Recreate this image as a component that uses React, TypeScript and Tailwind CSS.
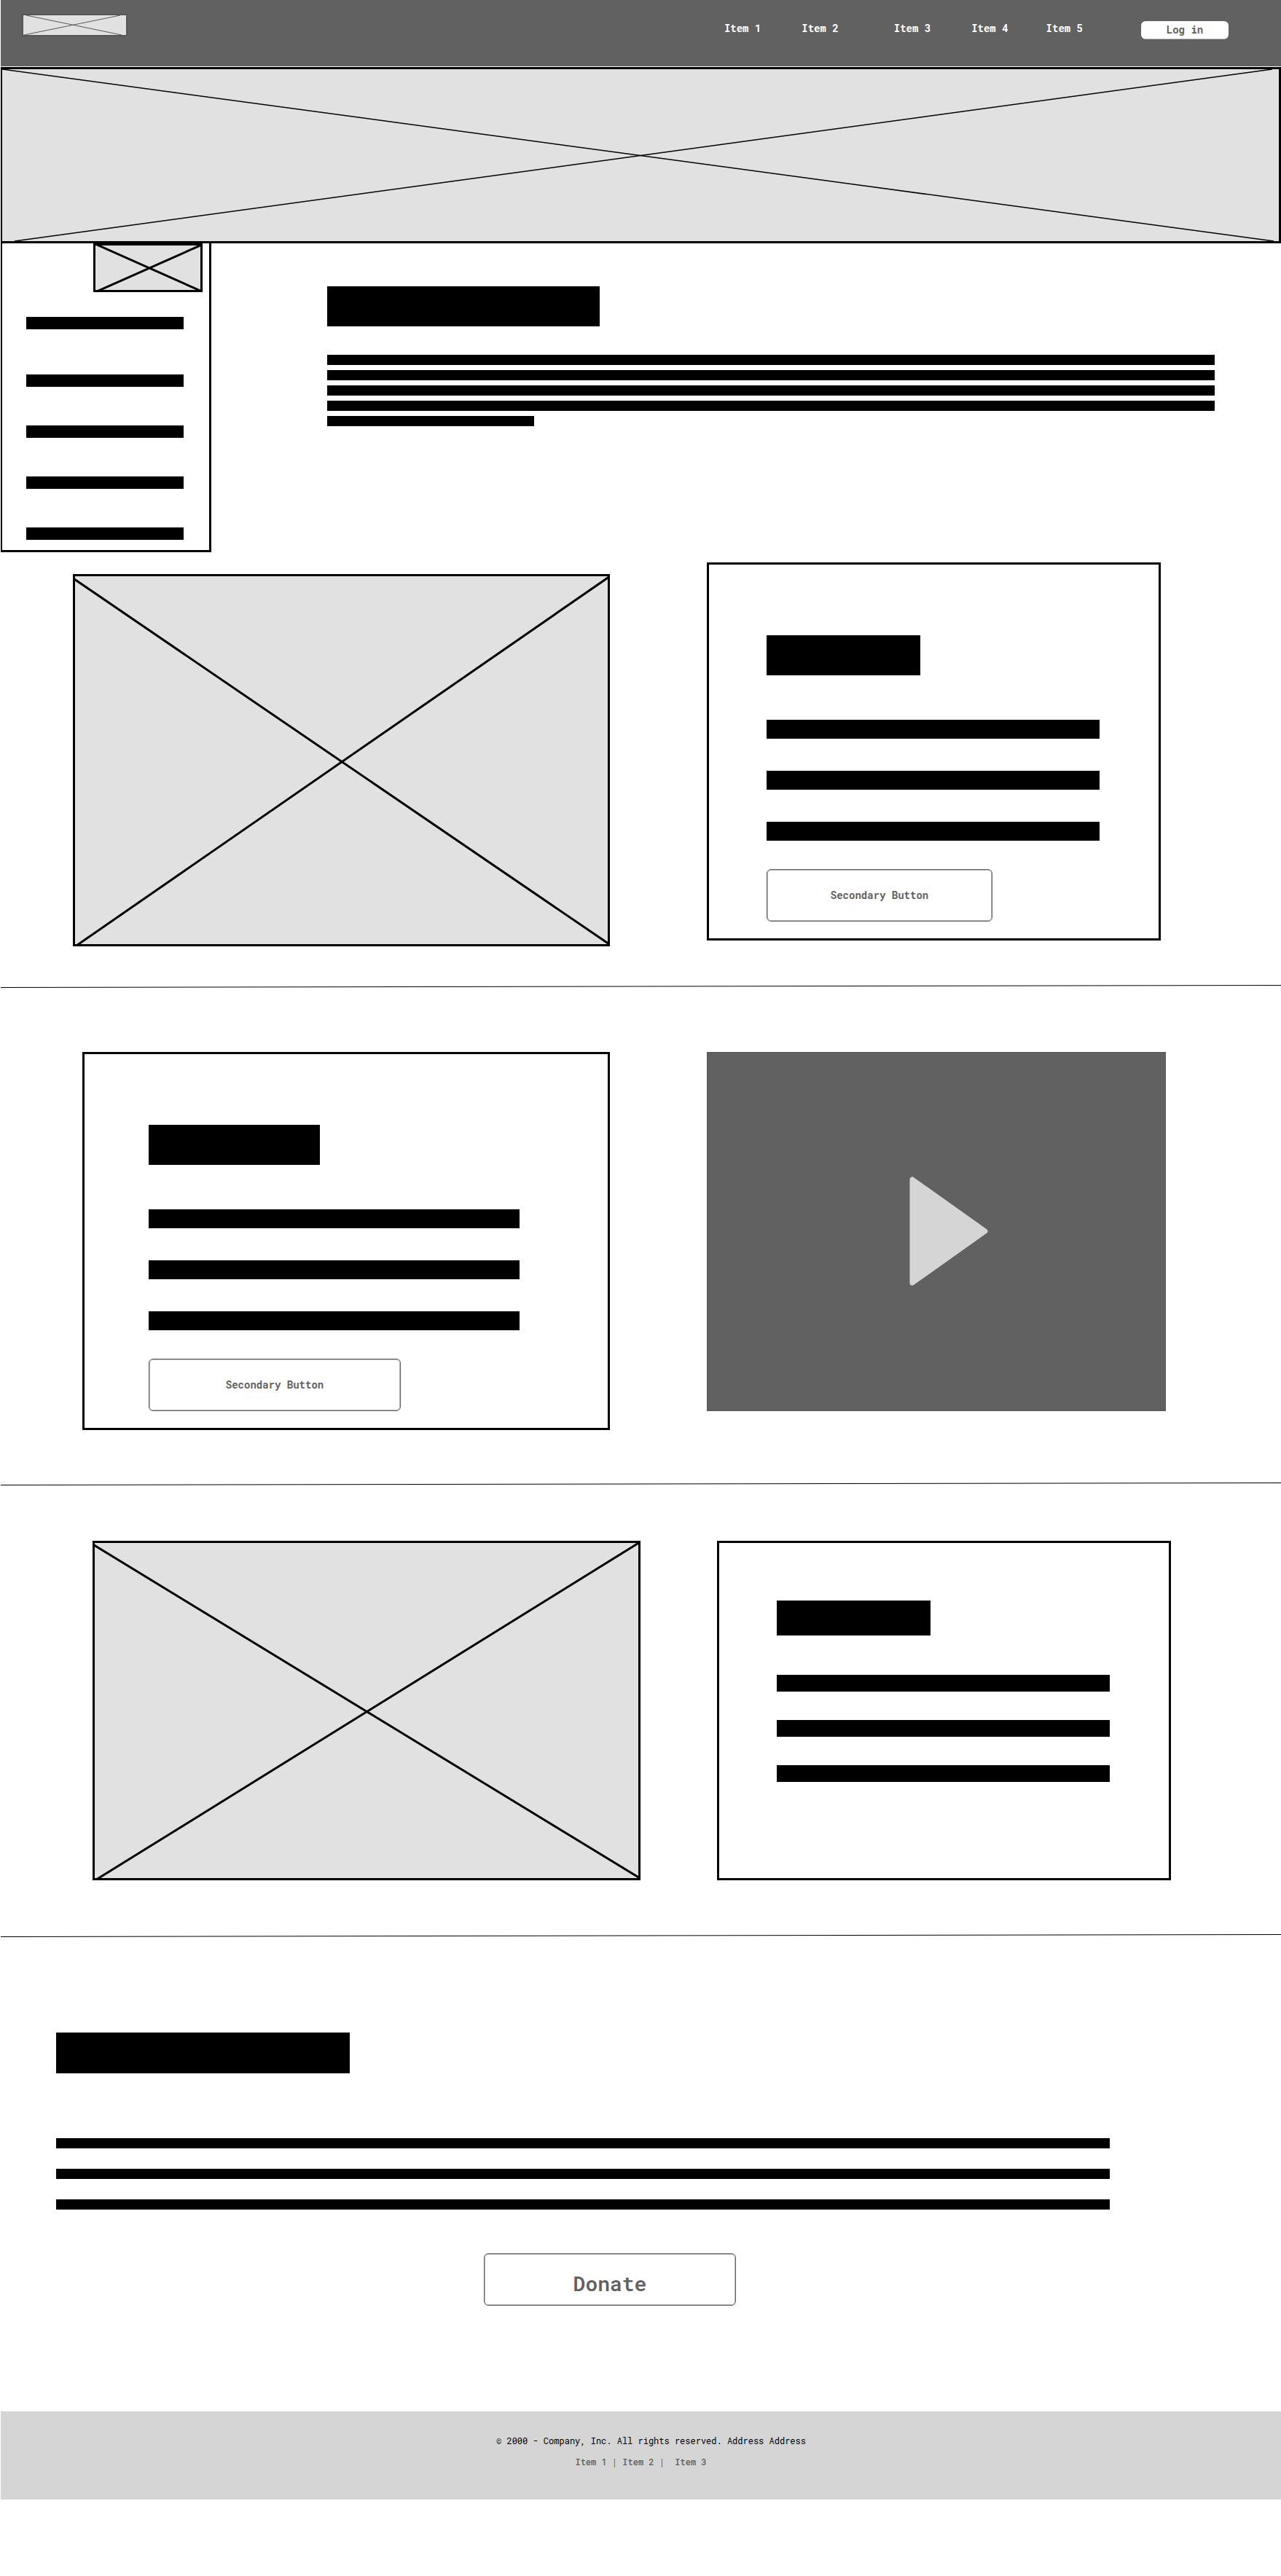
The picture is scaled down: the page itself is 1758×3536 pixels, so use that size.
import type { ReactNode } from "react";
import clsx from "clsx";

type Segment = [number, number, number, number];

/** Grey image box crossed by two diagonals. Coordinates are in the box's inner area. */
function ImagePlaceholder({
  label,
  width,
  height,
  lines,
  stroke,
  className,
}: {
  label: string;
  width: number;
  height: number;
  lines: Segment[];
  stroke: number;
  className?: string;
}) {
  return (
    <div role="img" aria-label={label} className={clsx("overflow-hidden bg-[#e1e1e1]", className)}>
      <svg
        className="block h-full w-full"
        viewBox={`0 0 ${width} ${height}`}
        preserveAspectRatio="none"
        stroke="currentColor"
        strokeWidth={stroke}
        aria-hidden="true"
      >
        {lines.map(([x1, y1, x2, y2], i) => (
          <line key={i} x1={x1} y1={y1} x2={x2} y2={y2} vectorEffect="non-scaling-stroke" />
        ))}
      </svg>
    </div>
  );
}

function Lines({ count, bar, className }: { count: number; bar: string; className?: string }) {
  return (
    <div className={clsx("flex flex-col", className)}>
      {Array.from({ length: count }, (_, i) => (
        <div key={i} className={clsx("w-full bg-black", bar)} />
      ))}
    </div>
  );
}

function Divider() {
  return (
    <svg
      className="block h-1 w-full"
      viewBox="0 0 1757 4"
      preserveAspectRatio="none"
      aria-hidden="true"
    >
      <line x1="0" y1="3.5" x2="1757" y2="0.5" stroke="#000" vectorEffect="non-scaling-stroke" />
    </svg>
  );
}

function OutlineButton({ children, className }: { children: ReactNode; className?: string }) {
  return (
    <button
      type="button"
      className={clsx(
        "flex h-18 max-w-full items-center justify-center rounded-md border border-[#616161] bg-white text-[#616161] ring-1 ring-[#b5b5b5] ring-inset",
        className,
      )}
    >
      {children}
    </button>
  );
}

const navItems = [
  { label: "Item 1", space: "" },
  { label: "Item 2", space: "ml-14" },
  { label: "Item 3", space: "ml-19" },
  { label: "Item 4", space: "ml-14" },
  { label: "Item 5", space: "ml-13" },
];

function Header() {
  return (
    <header className="flex items-start justify-between bg-[#616161] pt-[19px] pr-[72px] pb-[38px] pl-[29px]">
      <ImagePlaceholder
        label="Logo"
        width={141}
        height={27}
        stroke={1}
        lines={[
          [4, 0, 135, 27],
          [1, 27, 133, 0],
        ]}
        className="h-[31px] w-[145px] shrink-0 border-2 border-[#57575a] text-[#57575a]"
      />
      <nav className="mt-[10px] flex items-start text-sm font-bold text-white">
        <ul className="flex">
          {navItems.map((item) => (
            <li key={item.label} className={item.space}>
              <a href="#" className="whitespace-nowrap">
                {item.label}
              </a>
            </li>
          ))}
        </ul>
        <button
          type="button"
          className="ml-20 flex h-6 w-30 items-center justify-center rounded-md bg-white text-[#616161] shadow-[0_1px_0_#b5b5b5]"
        >
          Log in
        </button>
      </nav>
    </header>
  );
}

export default function App() {
  return (
    <div className="min-h-screen bg-white pl-px font-['Roboto_Mono','Liberation_Mono',monospace] text-black">
      <Header />

      <ImagePlaceholder
        label="Banner"
        width={1752}
        height={236}
        stroke={1.5}
        lines={[
          [0, 0, 1745, 236],
          [17, 236, 1743, 0],
        ]}
        className="mt-px h-[242px] border-3 border-l-2 border-black"
      />

      <div className="flex items-start">
        <aside className="flex w-[289px] shrink-0 flex-col border-r-3 border-b-3 border-l-2 border-black pb-[14px]">
          <ImagePlaceholder
            label="Profile"
            width={144}
            height={61}
            stroke={3}
            lines={[
              [2, -1, 146, 63],
              [2, 63, 146, -1],
            ]}
            className="mr-[9px] h-[67px] w-[150px] self-end border-3 border-black"
          />
          <div className="mt-[34px] mr-[35px] ml-[33px]">
            <div className="h-[17px] bg-black" />
            <Lines count={4} bar="h-[17px]" className="mt-[62px] gap-[53px]" />
          </div>
        </aside>

        <section className="min-w-0 grow pt-[59px] pr-[91px] pl-[159px]">
          <div className="h-[55px] w-[374px] max-w-full bg-black" />
          <Lines count={4} bar="h-[14px]" className="mt-[39px] gap-[7px]" />
          <div className="mt-[7px] h-[14px] w-[284px] max-w-full bg-black" />
        </section>
      </div>

      <section className="mt-[14px] mr-[165px] mb-[53px] ml-[99px] grid grid-cols-[737fr_133fr_623fr] items-start">
        <ImagePlaceholder
          label="Picture"
          width={731}
          height={505}
          stroke={3}
          lines={[
            [-1, 4, 733, 505],
            [-1, 509, 734, 0],
          ]}
          className="mt-4 h-[511px] border-3 border-black"
        />
        <div className="col-start-3 border-3 border-black pt-[97px] pr-[81px] pb-[23px] pl-[79px]">
          <div className="h-[55px] w-[211px] max-w-full bg-black" />
          <Lines count={3} bar="h-[26px]" className="mt-[61px] gap-11" />
          <OutlineButton className="mt-[39px] w-[310px] text-sm font-bold">
            Secondary Button
          </OutlineButton>
        </div>
      </section>

      <Divider />

      <section className="mt-[88px] mr-[158px] mb-[72px] ml-[112px] grid grid-cols-[724fr_133fr_630fr] items-start">
        <div className="border-3 border-black pt-[97px] pr-[121px] pb-[23px] pl-[88px]">
          <div className="h-[55px] w-[235px] max-w-full bg-black" />
          <Lines count={3} bar="h-[26px]" className="mt-[61px] gap-11" />
          <OutlineButton className="mt-[39px] w-[346px] text-sm font-bold">
            Secondary Button
          </OutlineButton>
        </div>
        <button
          type="button"
          aria-label="Play video"
          className="col-start-3 flex h-[493px] items-center justify-center border border-[#57575a] bg-[#616161] pb-0.5 pl-[34px]"
        >
          <svg width="108" height="152" viewBox="0 0 108 152" aria-hidden="true">
            <path
              d="M4 5V147L104 76Z"
              fill="#d5d5d5"
              stroke="#d5d5d5"
              strokeWidth="7"
              strokeLinejoin="round"
            />
          </svg>
        </button>
      </section>

      <Divider />

      <section className="mt-[76px] mr-[151px] mb-[74px] ml-[126px] grid grid-cols-[752fr_105fr_623fr] items-start">
        <ImagePlaceholder
          label="Picture"
          width={746}
          height={460}
          stroke={3}
          lines={[
            [-1, 3, 748, 460],
            [-1, 464, 748, -1],
          ]}
          className="h-[466px] border-3 border-black"
        />
        <div className="col-start-3 border-3 border-black pt-[79px] pr-[81px] pb-[132px] pl-[79px]">
          <div className="h-12 w-[211px] max-w-full bg-black" />
          <Lines count={3} bar="h-[23px]" className="mt-[54px] gap-[39px]" />
        </div>
      </section>

      <Divider />

      <section className="mt-[131px] mr-[235px] mb-[145px] ml-[76px]">
        <div className="h-14 w-[403px] max-w-full bg-black" />
        <Lines count={3} bar="h-[14px]" className="mt-[89px] gap-7" />
        <div className="mt-15 flex justify-center pl-[74px]">
          <OutlineButton className="w-[346px] pt-3 text-[28px] leading-7 font-semibold">
            Donate
          </OutlineButton>
        </div>
      </section>

      <footer className="flex flex-col items-center gap-[13px] bg-[#d5d5d5] pt-8 pb-11 text-xs">
        <p className="pl-7">© 2000 - Company, Inc. All rights reserved. Address Address</p>
        <p className="whitespace-pre text-[#616161]">
          <a href="#" className="font-medium">Item 1</a>
          {" | "}
          <a href="#" className="font-medium">Item 2</a>
          {" |  "}
          <a href="#" className="font-medium">Item 3</a>
        </p>
      </footer>
    </div>
  );
}
